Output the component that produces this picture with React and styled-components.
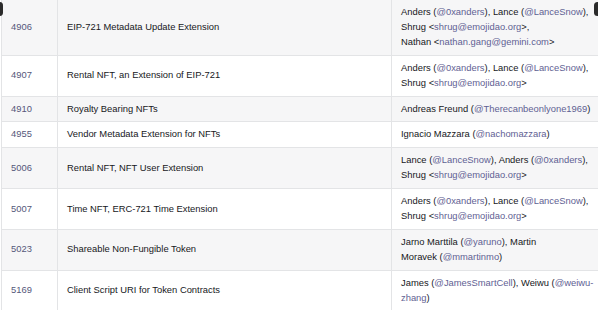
import React from "react";
import styled, { createGlobalStyle } from "styled-components";

const GlobalStyle = createGlobalStyle`
  html, body {
    margin: 0;
    padding: 0;
    background: #ffffff;
  }
  body {
    font-family: "Liberation Sans", Arial, sans-serif;
    width: 598px;
    height: 310px;
    overflow: hidden;
  }
`;

const Frame = styled.div`
  position: relative;
  width: 598px;
  height: 310px;
  overflow: hidden;
`;

const Table = styled.table`
  width: 597px;
  border-collapse: collapse;
  table-layout: fixed;
  margin-left: 1px;
  font-size: 9.4px;
  line-height: 14.9px;
  color: #16181c;
`;

const Row = styled.tr`
  background: ${(p) => (p.$striped ? "#f6f6f7" : "#ffffff")};
`;

const Cell = styled.td`
  border: 1px solid #e3e4e6;
  border-top: none;
  padding: 5px 9px;
  vertical-align: middle;
  white-space: nowrap;
  overflow: hidden;
`;

const Num = styled.a`
  color: #55577a;
  text-decoration: none;
`;

const Link = styled.a`
  color: #5f6193;
  text-decoration: none;
`;

const Blob = styled.div`
  position: absolute;
  top: 2px;
  ${(p) => (p.$side === "left" ? "left: -4px;" : "right: -3px;")}
  width: 7px;
  height: 14px;
  border-radius: 4px;
  background: #2b2b2b;
`;

const h = (x) => <Link>@{x}</Link>;
const m = (x) => (
  <>
    &lt;<Link>{x}</Link>&gt;
  </>
);

const rows = [
  {
    n: "4906",
    title: "EIP-721 Metadata Update Extension",
    authors: (
      <>
        Anders ({h("0xanders")}), Lance ({h("LanceSnow")}),
        <br />
        Shrug {m("shrug@emojidao.org")},
        <br />
        Nathan {m("nathan.gang@gemini.com")}
      </>
    ),
  },
  {
    n: "4907",
    title: "Rental NFT, an Extension of EIP-721",
    authors: (
      <>
        Anders ({h("0xanders")}), Lance ({h("LanceSnow")}),
        <br />
        Shrug {m("shrug@emojidao.org")}
      </>
    ),
  },
  {
    n: "4910",
    title: "Royalty Bearing NFTs",
    authors: <>Andreas Freund ({h("Therecanbeonlyone1969")})</>,
  },
  {
    n: "4955",
    title: "Vendor Metadata Extension for NFTs",
    authors: <>Ignacio Mazzara ({h("nachomazzara")})</>,
  },
  {
    n: "5006",
    title: "Rental NFT, NFT User Extension",
    authors: (
      <>
        Lance ({h("LanceSnow")}), Anders ({h("0xanders")}),
        <br />
        Shrug {m("shrug@emojidao.org")}
      </>
    ),
  },
  {
    n: "5007",
    title: "Time NFT, ERC-721 Time Extension",
    authors: (
      <>
        Anders ({h("0xanders")}), Lance ({h("LanceSnow")}),
        <br />
        Shrug {m("shrug@emojidao.org")}
      </>
    ),
  },
  {
    n: "5023",
    title: "Shareable Non-Fungible Token",
    authors: (
      <>
        Jarno Marttila ({h("yaruno")}), Martin
        <br />
        Moravek ({h("mmartinmo")})
      </>
    ),
  },
  {
    n: "5169",
    title: "Client Script URI for Token Contracts",
    authors: (
      <>
        James ({h("JamesSmartCell")}), Weiwu (<Link>@weiwu-</Link>
        <br />
        <Link>zhang</Link>)
      </>
    ),
  },
];

export default function App() {
  return (
    <Frame>
      <GlobalStyle />
      <Table>
        <colgroup>
          <col style={{ width: 56 }} />
          <col style={{ width: 334 }} />
          <col style={{ width: 207 }} />
        </colgroup>
        <tbody>
          {rows.map((r, i) => (
            <Row key={r.n} $striped={i % 2 === 0}>
              <Cell>
                <Num>{r.n}</Num>
              </Cell>
              <Cell>{r.title}</Cell>
              <Cell>{r.authors}</Cell>
            </Row>
          ))}
        </tbody>
      </Table>
      <Blob $side="left" />
      <Blob $side="right" />
    </Frame>
  );
}
